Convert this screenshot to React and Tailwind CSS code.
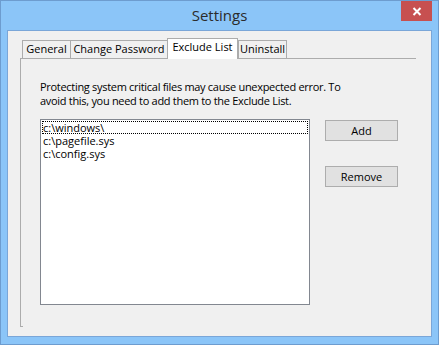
import React from 'react';

const font = { fontFamily: '"Open Sans", "Noto Sans", sans-serif' };

function Tab({ label, active, last, width }) {
  if (active) {
    return (
      <div
        className={`${width} h-[21px] -mb-px bg-white border border-b-0 border-[#acacac] flex items-center justify-center text-black whitespace-nowrap relative z-10`}
      >
        <span className="-mt-[3px]">{label}</span>
      </div>
    );
  }
  return (
    <div
      className={`${width} h-[18px] bg-[#f0f0f0] border-t border-l ${last ? 'border-r' : ''} border-[#acacac] flex items-center justify-center text-black whitespace-nowrap`}
    >
      {label}
    </div>
  );
}

function Button({ children }) {
  return (
    <button className="w-[73px] h-[21px] bg-[#e1e1e1] border border-[#adadad] text-black text-[11px] leading-none flex items-center justify-center">
      {children}
    </button>
  );
}

export default function App() {
  const items = ['c:\\windows\\', 'c:\\pagefile.sys', 'c:\\config.sys'];

  return (
    <div
      className="w-[439px] h-[345px] bg-[#8bc5f8] border border-[#6d9ccf] flex flex-col text-[11px]"
      style={font}
    >
      {/* Title bar */}
      <div className="h-[29px] grid grid-cols-[1fr_auto_1fr] shrink-0">
        <div />
        <div className="self-center text-[15px] text-[#2b2b2b] -mt-[1px]">Settings</div>
        <div className="flex justify-end items-start pr-[6px]">
          <div className="w-[31px] h-[20px] bg-[#c75050] flex items-center justify-center">
            <svg width="10" height="9" viewBox="0 0 10 9">
              <path d="M1.5 1 L8.5 8 M8.5 1 L1.5 8" stroke="white" strokeWidth="2" />
            </svg>
          </div>
        </div>
      </div>

      {/* Client area */}
      <div className="ml-[6px] w-[425px] h-[307px] border border-[#7aa6d8] bg-[#f0f0f0] flex flex-col">
        {/* Tab strip */}
        <div className="pl-[14px] pt-[7px] flex items-end">
          <Tab label="General" width="w-[48px]" />
          <Tab label="Change Password" width="w-[97px]" />
          <Tab label="Exclude List" width="w-[71px]" active />
          <Tab label="Uninstall" width="w-[49px]" last />
        </div>

        {/* Panel */}
        <div className="ml-[12px] w-[396px] h-[268px] border-t border-l border-[#acacac] pl-[19px] pt-[21px] flex flex-col">
          <p className="leading-[14px] text-black whitespace-nowrap tracking-[-0.3px]">
            Protecting system critical files may cause unexpected error. To
            <br />
            avoid this, you need to add them to the Exclude List.
          </p>

          <div className="mt-[11px] flex items-start">
            <div className="w-[270px] h-[186px] bg-white border border-[#828790] p-px">
              {items.map((item, i) => (
                <div
                  key={item}
                  className={`h-[13px] leading-[13px] pl-[1px] text-black ${
                    i === 0 ? 'outline outline-1 outline-dotted outline-black -outline-offset-1' : ''
                  }`}
                >
                  {item}
                </div>
              ))}
            </div>

            <div className="ml-[15px] mt-px flex flex-col gap-[25px]">
              <Button>Add</Button>
              <Button>Remove</Button>
            </div>
          </div>
        </div>
        <div className="ml-[12px] w-[3px] border-t border-[#acacac]" />
      </div>
    </div>
  );
}
